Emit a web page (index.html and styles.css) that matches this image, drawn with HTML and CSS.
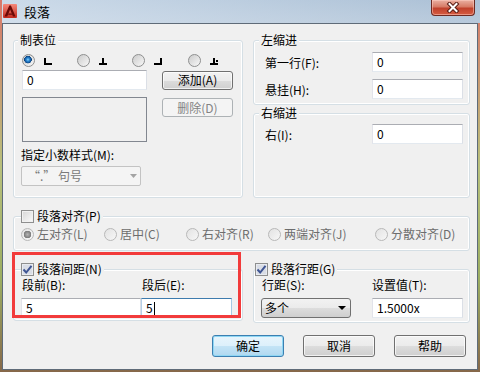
FILE: index.html
```html
<!DOCTYPE html>
<html>

<head>
    <meta charset="UTF-8">
    <title>段落</title>
    <link rel="stylesheet" href="styles.css">
</head>

<body>
    <div class="window">
        <div class="titlebar">
            <svg class="app-icon" width="14" height="14" viewBox="0 0 14 14">
                <defs>
                    <linearGradient id="iconBg" x1="0" y1="0" x2="0" y2="1">
                        <stop offset="0" stop-color="#f58a7c" />
                        <stop offset="1" stop-color="#c3281c" />
                    </linearGradient>
                </defs>
                <rect x="0" y="0" width="14" height="14" rx="1" fill="url(#iconBg)" />
                <path d="M1.5 12.5 L6.3 1.5 L7.9 1.5 L12.5 12.5 L10 12.5 L7.1 5.4 L4.2 12.5 Z" fill="#6a0906" />
                <path d="M5.6 9.6 L8.8 9.6 L9.3 10.8 L5.1 10.8 Z" fill="#6a0906" />
            </svg>
            <span class="title">段落</span>
            <div class="close-btn">
                <svg width="14" height="11" viewBox="0 0 14 11">
                    <path d="M3.5 2 L10.5 9 M10.5 2 L3.5 9" stroke="#5a1d15" stroke-width="4" stroke-linecap="square" />
                    <path d="M3.5 2 L10.5 9 M10.5 2 L3.5 9" stroke="#ffffff" stroke-width="2" stroke-linecap="square" />
                </svg>
            </div>
        </div>

        <div class="client">
            <!-- tab stops -->
            <div class="group tabs">
                <div class="group-title">制表位</div>
                <div class="tab-types">
                    <div class="tab-type">
                        <span class="radio on"></span>
                        <svg class="tab-mark" width="8" height="7" viewBox="0 0 8 7">
                            <rect x="0" y="0" width="2" height="7" />
                            <rect x="0" y="5" width="8" height="2" />
                        </svg>
                    </div>
                    <div class="tab-type">
                        <span class="radio"></span>
                        <svg class="tab-mark" width="8" height="7" viewBox="0 0 8 7">
                            <rect x="3" y="0" width="2" height="7" />
                            <rect x="0" y="5" width="8" height="2" />
                        </svg>
                    </div>
                    <div class="tab-type">
                        <span class="radio"></span>
                        <svg class="tab-mark" width="8" height="7" viewBox="0 0 8 7">
                            <rect x="6" y="0" width="2" height="7" />
                            <rect x="0" y="5" width="8" height="2" />
                        </svg>
                    </div>
                    <div class="tab-type">
                        <span class="radio"></span>
                        <svg class="tab-mark" width="8" height="7" viewBox="0 0 8 7">
                            <rect x="3" y="0" width="2" height="7" />
                            <rect x="0" y="5" width="8" height="2" />
                            <rect x="6" y="2" width="2" height="2" />
                        </svg>
                    </div>
                </div>
                <div class="tab-edit">
                    <div class="field wide">0</div>
                    <div class="btn">添加(A)</div>
                </div>
                <div class="tab-list">
                    <div class="listbox"></div>
                    <div class="btn disabled">删除(D)</div>
                </div>
                <div class="label">指定小数样式(M):</div>
                <div class="combo disabled">
                    <span>“.” 句号</span>
                    <svg width="7" height="4" viewBox="0 0 7 4"><path d="M0 0 H7 L3.5 4 Z" fill="#a3a3a3" /></svg>
                </div>
            </div>

            <!-- indents -->
            <div class="indent-col">
                <div class="group indent left-indent">
                    <div class="group-title">左缩进</div>
                    <div class="indent-row">
                        <span>第一行(F):</span>
                        <div class="field num">0</div>
                    </div>
                    <div class="indent-row">
                        <span>悬挂(H):</span>
                        <div class="field num">0</div>
                    </div>
                </div>
                <div class="group indent right-indent">
                    <div class="group-title">右缩进</div>
                    <div class="indent-row">
                        <span>右(I):</span>
                        <div class="field num">0</div>
                    </div>
                </div>
            </div>

            <!-- alignment -->
            <div class="group align">
                <div class="check-title">
                    <span class="check"></span>
                    <span>段落对齐(P)</span>
                </div>
                <div class="align-options">
                    <div class="option"><span class="radio disabled on"></span>左对齐(L)</div>
                    <div class="option"><span class="radio disabled"></span>居中(C)</div>
                    <div class="option"><span class="radio disabled"></span>右对齐(R)</div>
                    <div class="option"><span class="radio disabled"></span>两端对齐(J)</div>
                    <div class="option"><span class="radio disabled"></span>分散对齐(D)</div>
                </div>
            </div>

            <!-- paragraph spacing -->
            <div class="group spacing marked">
                <div class="check-title">
                    <span class="check checked">
                        <svg width="11" height="11" viewBox="0 0 11 11"><path d="M1.5 5.5 L4.2 8.5 L9.5 1.8" fill="none" stroke="#3f5593" stroke-width="2" /></svg>
                    </span>
                    <span>段落间距(N)</span>
                </div>
                <div class="spacing-grid">
                    <span class="caption">段前(B):</span>
                    <span class="caption">段后(E):</span>
                    <div class="field">5</div>
                    <div class="field focused">5<span class="caret"></span></div>
                </div>
            </div>

            <!-- line spacing -->
            <div class="group spacing line-spacing">
                <div class="check-title">
                    <span class="check checked">
                        <svg width="11" height="11" viewBox="0 0 11 11"><path d="M1.5 5.5 L4.2 8.5 L9.5 1.8" fill="none" stroke="#3f5593" stroke-width="2" /></svg>
                    </span>
                    <span>段落行距(G)</span>
                </div>
                <div class="spacing-grid">
                    <span class="caption">行距(S):</span>
                    <span>设置值(T):</span>
                    <div class="combo">
                        <span>多个</span>
                        <svg width="8" height="4" viewBox="0 0 8 4"><path d="M0 0 H8 L4 4 Z" fill="#000" /></svg>
                    </div>
                    <div class="field">1.5000x</div>
                </div>
            </div>

            <div class="actions">
                <div class="btn dlg-btn default">确定</div>
                <div class="btn dlg-btn">取消</div>
                <div class="btn dlg-btn">帮助</div>
            </div>
        </div>
    </div>
</body>

</html>
```

FILE: styles.css
```css
* {
    box-sizing: border-box;
}

body {
    margin: 0;
    width: 480px;
    height: 372px;
    overflow: hidden;
    font-family: "Noto Sans CJK SC", "Liberation Sans", sans-serif;
    font-size: 12px;
    color: #000;
    background: linear-gradient(180deg, #d9786a 0%, #b8c07c 45%, #9cae62 75%, #86684a 100%);
}

.window {
    height: 372px;
    display: flex;
    flex-direction: column;
}

/* title bar */

.titlebar {
    height: 23px;
    margin-left: 2px;
    display: flex;
    align-items: flex-start;
    background: linear-gradient(90deg, rgba(214, 226, 238, 0.7), rgba(160, 182, 204, 0.4)),
        linear-gradient(180deg, #b3c7dc 0%, #c2d2e3 70%, #c8d6e5 100%);
}

.app-icon {
    margin: 4px 0 0 1px;
}

.title {
    margin: 4px 0 0 7px;
    font-size: 13px;
    line-height: 15px;
}

.close-btn {
    margin-left: auto;
    margin-right: 5px;
    width: 44px;
    height: 16px;
    border: 1px solid #6d2a22;
    border-top: none;
    border-radius: 0 0 4px 4px;
    background: linear-gradient(180deg, #eab0a2 0%, #d77b66 45%, #c0412c 55%, #d65c42 100%);
    box-shadow: inset 0 0 0 1px rgba(255, 210, 200, 0.5);
    display: flex;
    align-items: center;
    justify-content: center;
}

/* client area */

.client {
    flex: 1;
    margin: 0 2px 2px 2px;
    border: 1px solid #5f6b78;
    background: #f0f0f0;
    display: grid;
    grid-template-columns: 230px 217px;
    column-gap: 10px;
    align-content: start;
    align-items: start;
    padding: 9px 7px 0 10px;
}

.group {
    border: 1px solid #d5dfe5;
    border-radius: 3px;
    box-shadow: inset 0 0 0 1px #fff;
    margin-top: 7px;
    padding: 0 6px 0 7px;
}

.group-title {
    width: fit-content;
    margin-top: -8px;
    padding: 0 2px;
    line-height: 14px;
    background: #f0f0f0;
}

.check-title {
    display: flex;
    align-items: center;
    gap: 3px;
    width: fit-content;
    margin-top: -8px;
    padding-right: 2px;
    line-height: 14px;
    background: #f0f0f0;
}

/* controls */

.field {
    height: 20px;
    border: 1px solid;
    border-color: #abadb3 #dbdfe6 #e3e9ef #e2e3ea;
    background: #fff;
    padding: 0 4px;
    line-height: 18px;
    white-space: nowrap;
}

.field.focused {
    border-color: #3d7bad #a4c9e3 #b7d9ed #b5cfe7;
}

.caret {
    display: inline-block;
    width: 1px;
    height: 13px;
    margin-left: 1px;
    background: #000;
    vertical-align: -2px;
}

.btn {
    width: 71px;
    height: 19px;
    border: 1px solid #707070;
    border-radius: 3px;
    background: linear-gradient(180deg, #f2f2f2 0%, #ebebeb 50%, #dddddd 50%, #cfcfcf 100%);
    box-shadow: inset 0 0 0 1px rgba(255, 255, 255, 0.7);
    display: flex;
    align-items: center;
    justify-content: center;
    line-height: 14px;
}

.btn.disabled {
    border-color: #adb2b5;
    background: #f4f4f4;
    box-shadow: none;
    color: #838383;
}

.radio {
    flex: none;
    width: 13px;
    height: 13px;
    border-radius: 50%;
    border: 1px solid #8e8f8f;
    background: linear-gradient(135deg, #cbcbcb, #f8f8f8);
}

.radio.on {
    background: radial-gradient(circle at 45% 42%, #8fd6ff 0, #2a88d2 1.6px, #14599f 3px, #0b3f77 3.6px, transparent 4px),
        linear-gradient(135deg, #cbcbcb, #f8f8f8);
}

.radio.disabled {
    border-color: #b8b8b8;
    background: linear-gradient(135deg, #e2e2e2, #f7f7f7);
}

.radio.disabled.on {
    background: radial-gradient(circle, #b5b5b5 0, #8c8c8c 2.5px, #7a7a7a 3.5px, transparent 4px),
        linear-gradient(135deg, #e2e2e2, #f7f7f7);
}

.check {
    flex: none;
    width: 13px;
    height: 13px;
    border: 1px solid #8e8f8f;
    background: linear-gradient(135deg, #d6d6d6, #fbfbfb);
    box-shadow: inset 0 0 0 1px #f1f1f1;
    display: flex;
    align-items: center;
    justify-content: center;
}

.check.checked {
    background: #d9dde6;
    box-shadow: inset 0 0 0 1px #e8ebf0;
}

.combo {
    height: 20px;
    border: 1px solid #707070;
    border-radius: 3px;
    background: linear-gradient(180deg, #f2f2f2 0%, #ebebeb 50%, #dddddd 50%, #cfcfcf 100%);
    display: flex;
    align-items: center;
    justify-content: space-between;
    padding: 0 4px 0 3px;
    line-height: 14px;
}

.combo.disabled {
    border-color: #c3c3c3;
    border-radius: 2px;
    background: #f4f4f4;
    color: #7a7a7a;
    padding: 0 3px 0 6px;
}

/* tab stops */

.tabs {
    height: 158px;
    padding-left: 8px;
}

.tabs .group-title {
    margin-left: -4px;
}

.tab-types {
    display: grid;
    grid-template-columns: 55px 55px 56px auto;
    margin-top: 6px;
    height: 14px;
}

.tab-type {
    display: flex;
    align-items: center;
    gap: 9px;
}

.tab-mark {
    margin-top: 3px;
    fill: #000;
}

.tab-edit {
    display: flex;
    align-items: center;
    gap: 15px;
    margin-top: 3px;
}

.field.wide {
    width: 125px;
}

.tab-list {
    display: flex;
    align-items: flex-start;
    gap: 15px;
    margin-top: 7px;
}

.listbox {
    width: 125px;
    height: 45px;
    border: 1px solid #828790;
    background: #f0f0f0;
}

.tab-list .btn {
    margin-top: 1px;
}

.tabs .label {
    margin: 6px 0 0 -1px;
    line-height: 14px;
}

.tabs .combo {
    width: 120px;
    margin: 4px 0 0 -1px;
}

/* indents */

.indent-col {
    display: flex;
    flex-direction: column;
}

.indent {
    padding: 0 6px 0 11px;
}

.indent .group-title {
    margin-left: -6px;
}

.left-indent {
    height: 65px;
}

.right-indent {
    height: 85px;
    margin-top: 8px;
}

.indent-row {
    display: flex;
    align-items: center;
    justify-content: space-between;
    margin-top: 5px;
}

.indent-row + .indent-row {
    margin-top: 7px;
}

.right-indent .indent-row {
    margin-top: 4px;
}

.field.num {
    width: 91px;
}

/* alignment */

.align {
    grid-column: 1 / -1;
    height: 35px;
    margin-top: 18px;
}

.align-options {
    display: grid;
    grid-template-columns: 83px 82px 82px 107px auto;
    margin-top: 4px;
    color: #6d6d6d;
    line-height: 14px;
}

.option {
    display: flex;
    align-items: center;
    gap: 3px;
}

/* spacing */

.spacing {
    height: 54px;
    margin-top: 18px;
}

.marked {
    position: relative;
    height: 52px;
}

.marked::after {
    content: "";
    position: absolute;
    left: -2px;
    top: -18px;
    right: 1px;
    bottom: 2px;
    border: 3px solid #f23b3b;
}

.line-spacing .check-title {
    margin-left: -6px;
}

.spacing-grid {
    display: grid;
    grid-template-columns: 120px 91px;
    row-gap: 6px;
    margin-top: 2px;
    line-height: 14px;
}

.line-spacing .spacing-grid {
    grid-template-columns: 111px 91px;
}

.caption {
    padding-left: 1px;
}

.line-spacing .combo {
    width: 90px;
}

/* dialog buttons */

.actions {
    grid-column: 1 / -1;
    display: flex;
    justify-content: flex-end;
    gap: 19px;
    margin-top: 12px;
    padding-right: 4px;
}

.dlg-btn {
    width: 72px;
    height: 22px;
}

.dlg-btn.default {
    border-color: #3c7fb1;
    background: linear-gradient(180deg, #e8f5fc 0%, #dcf0fb 50%, #c4e4f6 50%, #b0d8f0 100%);
    box-shadow: inset 0 0 0 1px #8fd7f4;
}
```
